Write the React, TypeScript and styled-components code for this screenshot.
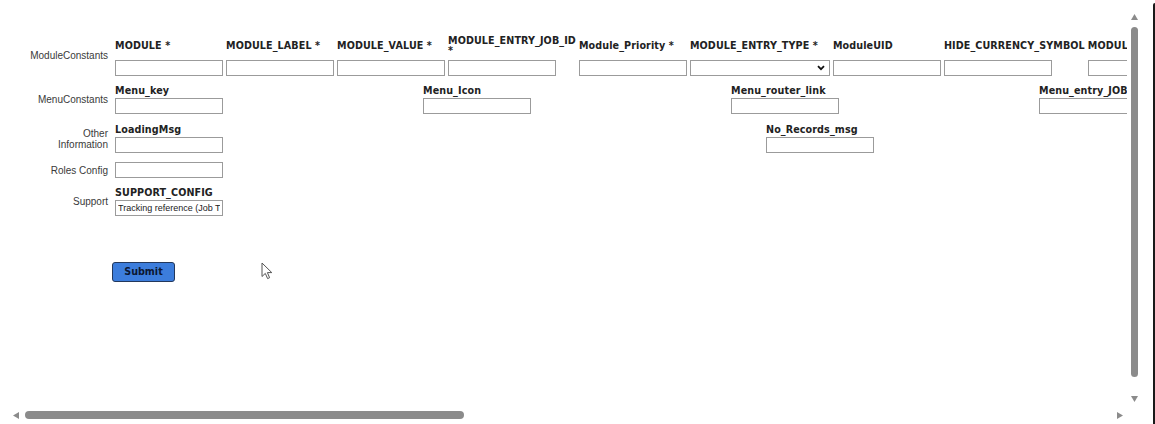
import React from "react";
import styled, { createGlobalStyle } from "styled-components";

const Global = createGlobalStyle`
  html, body { margin: 0; padding: 0; background: #fff; overflow: hidden; }
  body { width: 1155px; height: 424px; }
  #root { width: 1155px; height: 424px; }
`;

const Frame = styled.div`
  display: grid;
  grid-template-columns: 1127px 15px 13px;
  grid-template-rows: 404px 20px;
  width: 1155px;
  height: 424px;
  background: #fff;
`;

const Viewport = styled.div`
  grid-column: 1;
  grid-row: 1;
  position: relative;
  overflow: hidden;
`;

const Form = styled.form`
  display: flex;
  flex-direction: column;
  gap: 9px;
  padding-top: 34px;
  width: max-content;
`;

const Row = styled.div<{ $push?: number }>`
  display: flex;
  align-items: center;
  gap: 7px;
  margin-top: ${(p) => (p.$push ? `${p.$push}px` : "0")};
`;

const SideLabel = styled.div`
  width: 78px;
  margin-left: 30px;
  flex: none;
  text-align: right;
  font-family: "Liberation Sans", Arial, sans-serif;
  font-size: 10px;
  line-height: 11px;
  color: #3a3a3a;
`;

const Fields = styled.div`
  display: flex;
  gap: 3px;
  align-items: flex-end;
`;

const Cell = styled.div<{ $w?: number }>`
  display: flex;
  flex-direction: column;
  width: ${(p) => (p.$w ? `${p.$w}px` : "min-content")};
  min-width: 108px;
`;

const FieldLabel = styled.div<{ $tall?: boolean }>`
  display: flex;
  align-items: center;
  height: ${(p) => (p.$tall ? "24px" : "12px")};
  margin-bottom: ${(p) => (p.$tall ? "2px" : "1px")};
  font-family: "DejaVu Sans", Verdana, sans-serif;
  font-weight: bold;
  font-size: 9.6px;
  letter-spacing: 0.1px;
  line-height: 10px;
  color: #222;
  white-space: normal;
`;

const TextInput = styled.input`
  display: block;
  box-sizing: border-box;
  width: 108px;
  height: 16px;
  margin: 0;
  padding: 1px 2px;
  border: 1px solid #9b9b9b;
  background: #fff;
  font-family: "Liberation Sans", Arial, sans-serif;
  font-size: 9px;
  color: #222;
  outline: none;
`;

const SelectWrap = styled.div`
  position: relative;
  width: 140px;
  height: 16px;
`;

const Select = styled.select`
  display: block;
  box-sizing: border-box;
  width: 140px;
  height: 16px;
  margin: 0;
  padding: 0 2px;
  border: 1px solid #9b9b9b;
  background: #fff;
  appearance: none;
  -webkit-appearance: none;
  border-radius: 0;
  font-size: 9px;
  outline: none;
`;

const Chevron = styled.svg`
  position: absolute;
  right: 5px;
  top: 5px;
  pointer-events: none;
`;

const SubmitRow = styled.div`
  margin-top: 36px;
  margin-left: 112px;
`;

const SubmitButton = styled.button`
  box-sizing: border-box;
  width: 63px;
  height: 20px;
  padding: 0;
  background: #3c7ddc;
  border: 1px solid #23385c;
  border-radius: 3px;
  font-family: "DejaVu Sans", Verdana, sans-serif;
  font-weight: bold;
  font-size: 9.6px;
  color: #0b1733;
`;

const Cursor = styled.svg`
  position: absolute;
  left: 261px;
  top: 262px;
`;

const VScroll = styled.div`
  grid-column: 2;
  grid-row: 1;
  display: flex;
  flex-direction: column;
  align-items: center;
  padding: 14px 0 2px;
  gap: 7px;
`;

const VThumb = styled.div`
  width: 7px;
  height: 350px;
  border-radius: 4px;
  background: #8b8b8b;
`;

const Spacer = styled.div`
  flex: 1;
`;

const HScroll = styled.div`
  grid-column: 1;
  grid-row: 2;
  display: flex;
  align-items: center;
  padding: 0 4px 0 13px;
  gap: 6px;
  margin-top: 2px;
`;

const HThumb = styled.div`
  width: 439px;
  height: 8px;
  border-radius: 4px;
  background: #8b8b8b;
`;

const RightStrip = styled.div`
  grid-column: 3;
  grid-row: 1 / span 2;
  display: flex;
  justify-content: flex-end;
`;

const EdgeLine = styled.div`
  width: 2px;
  margin-top: 3px;
  background: #1a1a1a;
  border-top-left-radius: 3px;
`;

const Arrow = ({ dir }: { dir: "up" | "down" | "left" | "right" }) => {
  const pts =
    dir === "up"
      ? "0,6 3.5,0 7,6"
      : dir === "down"
      ? "0,0 7,0 3.5,6"
      : dir === "left"
      ? "6,0 6,7 0,3.5"
      : "0,0 0,7 6,3.5";
  const w = dir === "up" || dir === "down" ? 7 : 6;
  const h = dir === "up" || dir === "down" ? 6 : 7;
  return (
    <svg width={w} height={h} viewBox={`0 0 ${w} ${h}`}>
      <polygon points={pts} fill="#8b8b8b" />
    </svg>
  );
};

const row1 = [
  "MODULE *",
  "MODULE_LABEL *",
  "MODULE_VALUE *",
  "MODULE_ENTRY_JOB_ID *",
  "Module_Priority *",
  "MODULE_ENTRY_TYPE *",
  "ModuleUID",
  "HIDE_CURRENCY_SYMBOL",
  "MODULE_ENTRY_SCREEN",
];

const row2 = ["Menu_key", "Menu_Icon", "Menu_router_link", "Menu_entry_JOB_ID"];

export default function App() {
  return (
    <>
      <Global />
      <Frame>
        <Viewport>
          <Form onSubmit={(e) => e.preventDefault()}>
            <Row>
              <SideLabel>ModuleConstants</SideLabel>
              <Fields>
                {row1.map((l) => (
                  <Cell key={l}>
                    <FieldLabel $tall>{l}</FieldLabel>
                    {l === "MODULE_ENTRY_TYPE *" ? (
                      <SelectWrap>
                        <Select defaultValue="">
                          <option value=""></option>
                        </Select>
                        <Chevron width="8" height="6" viewBox="0 0 8 6">
                          <path d="M1 1.2 L4 4.2 L7 1.2" stroke="#111" strokeWidth="1.8" fill="none" />
                        </Chevron>
                      </SelectWrap>
                    ) : (
                      <TextInput />
                    )}
                  </Cell>
                ))}
              </Fields>
            </Row>
            <Row>
              <SideLabel>MenuConstants</SideLabel>
              <Fields>
                {row2.map((l) => (
                  <Cell key={l} $w={305}>
                    <FieldLabel>{l}</FieldLabel>
                    <TextInput />
                  </Cell>
                ))}
              </Fields>
            </Row>
            <Row $push={1}>
              <SideLabel>
                Other
                <br />
                Information
              </SideLabel>
              <Fields>
                <Cell $w={648}>
                  <FieldLabel>LoadingMsg</FieldLabel>
                  <TextInput />
                </Cell>
                <Cell $w={305}>
                  <FieldLabel>No_Records_msg</FieldLabel>
                  <TextInput />
                </Cell>
              </Fields>
            </Row>
            <Row>
              <SideLabel>Roles Config</SideLabel>
              <Fields>
                <Cell>
                  <TextInput />
                </Cell>
              </Fields>
            </Row>
            <Row>
              <SideLabel>Support</SideLabel>
              <Fields>
                <Cell>
                  <FieldLabel>SUPPORT_CONFIG</FieldLabel>
                  <TextInput defaultValue="Tracking reference (Job Title)" />
                </Cell>
              </Fields>
            </Row>
            <SubmitRow>
              <SubmitButton type="submit">Submit</SubmitButton>
            </SubmitRow>
          </Form>
          <Cursor width="13" height="18" viewBox="0 0 13 18">
            <path
              d="M1 1 L1 14.5 L4.3 11.4 L6.6 16.6 L8.6 15.7 L6.4 10.6 L10.8 10.6 Z"
              fill="#fff"
              stroke="#555"
              strokeWidth="1"
              strokeLinejoin="round"
            />
          </Cursor>
        </Viewport>
        <VScroll>
          <Arrow dir="up" />
          <VThumb />
          <Spacer />
          <Arrow dir="down" />
        </VScroll>
        <HScroll>
          <Arrow dir="left" />
          <HThumb />
          <Spacer />
          <Arrow dir="right" />
        </HScroll>
        <RightStrip>
          <EdgeLine />
        </RightStrip>
      </Frame>
    </>
  );
}
